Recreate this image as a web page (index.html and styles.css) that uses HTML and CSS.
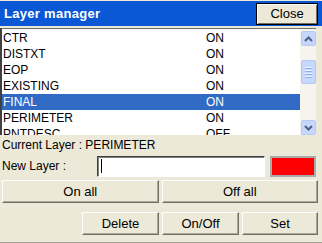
FILE: index.html
```html
<!DOCTYPE html>
<html lang="en">
  <head>
    <title>Layer manager</title>
    <meta charset="utf-8">
    <link rel="stylesheet" href="styles.css">
  </head>
  <body>
  <div class="window">
    <div class="titlebar">
      <span class="title">Layer manager</span>
      <button class="btn close">Close</button>
    </div>

    <div class="list">
      <div class="rows">
        <div class="row"><span class="name">CTR</span><span class="state">ON</span></div>
        <div class="row"><span class="name">DISTXT</span><span class="state">ON</span></div>
        <div class="row"><span class="name">EOP</span><span class="state">ON</span></div>
        <div class="row"><span class="name">EXISTING</span><span class="state">ON</span></div>
        <div class="row selected"><span class="name">FINAL</span><span class="state">ON</span></div>
        <div class="row"><span class="name">PERIMETER</span><span class="state">ON</span></div>
        <div class="row"><span class="name">PNTDESC</span><span class="state">OFF</span></div>
      </div>
      <div class="scrollbar">
        <div class="sb-btn">
          <svg width="9" height="6" viewBox="0 0 9 6"><path d="M1 5 L4.5 1.5 L8 5" fill="none" stroke="#4d6185" stroke-width="2"/></svg>
        </div>
        <div class="sb-gap1"></div>
        <div class="sb-thumb">
          <span></span><span></span><span></span><span></span>
        </div>
        <div class="sb-gap2"></div>
        <div class="sb-btn">
          <svg width="9" height="6" viewBox="0 0 9 6"><path d="M1 1 L4.5 4.5 L8 1" fill="none" stroke="#4d6185" stroke-width="2"/></svg>
        </div>
      </div>
    </div>

    <div class="current">Current Layer : PERIMETER</div>

    <div class="newlayer">
      <label class="label">New Layer :</label>
      <div class="input"><span class="caret"></span></div>
      <div class="swatch"></div>
    </div>

    <div class="btnrow">
      <button class="btn">On all</button>
      <button class="btn">Off all</button>
    </div>

    <div class="btnrow small">
      <button class="btn">Delete</button>
      <button class="btn">On/Off</button>
      <button class="btn">Set</button>
    </div>
  </div>
  </body>
</html>
```

FILE: styles.css
```css
html, body {
  margin: 0;
  padding: 0;
}
body {
  background: #ece9d8;
  font-family: "Liberation Sans", Arial, sans-serif;
  font-size: 12px;
  color: #000;
}

.window {
  width: 322px;
  height: 243px;
  background: #ece9d8;
  overflow: hidden;
  box-sizing: border-box;
  border-bottom: 1px solid #a5a293;
}

.titlebar {
  height: 25px;
  margin-top: 1px;
  background: #0a58d6;
  display: flex;
  align-items: center;
  justify-content: space-between;
  padding: 0 4px 0 4px;
}
.title {
  color: #fff;
  font-weight: bold;
  font-size: 13px;
  letter-spacing: 0.3px;
}

.btn {
  font-family: "Liberation Sans", Arial, sans-serif;
  font-size: 12px;
  color: #000;
  background: #ece9d8;
  border: 1px solid;
  border-color: #fff #716f64 #716f64 #fff;
  box-shadow: inset -1px -1px 0 #aca899;
  padding: 0;
  margin: 0;
}
.close {
  width: 62px;
  height: 22px;
  border: 1px solid #000;
  box-shadow: inset 1px 1px 0 #fff, inset -1px -1px 0 #716f64;
  font-size: 13px;
  margin-right: 0;
}

.list {
  margin-top: 2px;
  height: 107px;
  display: flex;
  border-top: 1px solid #716f64;
  border-left: 2px solid #404040;
  background: #fff;
  width: 316px;
  box-sizing: border-box;
}
.rows {
  flex: 1;
  overflow: hidden;
  padding-top: 1px;
}
.row {
  height: 16px;
  line-height: 16px;
  display: flex;
  padding-left: 1px;
}
.row.selected {
  background: #316ac5;
  color: #fff;
}
.name {
  width: 203px;
}

.scrollbar {
  width: 16px;
  display: flex;
  flex-direction: column;
  background: #f5f4ed;
  padding: 2px 0 0 1px;
  box-sizing: border-box;
}
.sb-btn {
  width: 15px;
  height: 15px;
  box-sizing: border-box;
  border: 1px solid #b9c9ef;
  border-radius: 2px;
  background: #c6d6fc;
  display: flex;
  align-items: center;
  justify-content: center;
}
.sb-gap1 {
  height: 14px;
}
.sb-thumb {
  width: 15px;
  height: 24px;
  box-sizing: border-box;
  border: 1px solid #b4c8f6;
  border-radius: 2px;
  background: #c8d8fc;
  display: flex;
  flex-direction: column;
  align-items: center;
  justify-content: center;
  gap: 1px;
}
.sb-thumb span {
  width: 7px;
  height: 1px;
  background: #eef4fe;
  border-bottom: 1px solid #8cb0f8;
}
.sb-gap2 {
  flex: 1;
}

.current {
  padding: 3px 0 0 2px;
  height: 17px;
}

.newlayer {
  display: flex;
  align-items: center;
  height: 22px;
  margin-top: 0;
}
.label {
  width: 95px;
  padding-left: 2px;
}
.input {
  width: 168px;
  height: 21px;
  box-sizing: border-box;
  background: #fff;
  border: 1px solid;
  border-color: #404040 #fff #fff #404040;
  box-shadow: inset 1px 1px 0 #808080;
  display: flex;
  align-items: center;
  padding-left: 3px;
}
.caret {
  width: 1px;
  height: 14px;
  background: #000;
}
.swatch {
  width: 46px;
  height: 21px;
  margin-left: 5px;
  box-sizing: border-box;
  background: #ff0000;
  border: 2px solid #aaa;
}

.btnrow {
  display: grid;
  grid-template-columns: 1fr 1fr;
  gap: 3px;
  padding: 3px 4px 0 2px;
}
.btnrow .btn {
  height: 23px;
  font-size: 13px;
}
.btnrow.small {
  grid-template-columns: 77px 77px 76px;
  justify-content: end;
  padding-top: 9px;
}
```
